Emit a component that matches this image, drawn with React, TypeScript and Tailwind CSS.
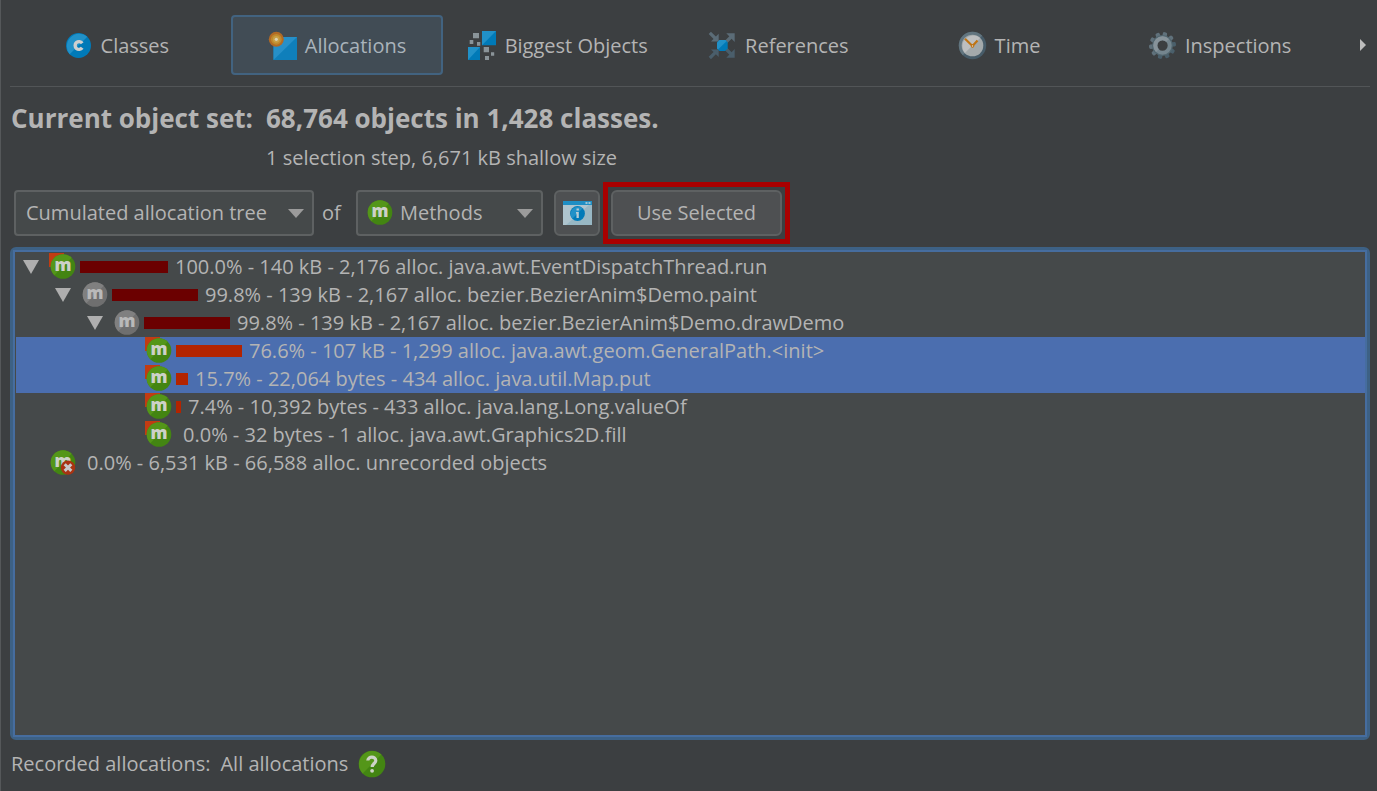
import { useState } from "react";
import type { ReactNode } from "react";

type Kind = "method" | "inner" | "unrecorded";

type Node = {
  depth: number;
  open?: boolean;
  kind: Kind;
  flag?: boolean;
  bar: number;
  dark?: boolean;
  selected?: boolean;
  text: string;
};

const nodes: Node[] = [
  { depth: 0, open: true, kind: "method", flag: true, bar: 88, dark: true, text: "100.0% - 140 kB - 2,176 alloc. java.awt.EventDispatchThread.run" },
  { depth: 1, open: true, kind: "inner", bar: 86, dark: true, text: "99.8% - 139 kB - 2,167 alloc. bezier.BezierAnim$Demo.paint" },
  { depth: 2, open: true, kind: "inner", bar: 86, dark: true, text: "99.8% - 139 kB - 2,167 alloc. bezier.BezierAnim$Demo.drawDemo" },
  { depth: 3, kind: "method", flag: true, bar: 66, selected: true, text: "76.6% - 107 kB - 1,299 alloc. java.awt.geom.GeneralPath.<init>" },
  { depth: 3, kind: "method", flag: true, bar: 12, selected: true, text: "15.7% - 22,064 bytes - 434 alloc. java.util.Map.put" },
  { depth: 3, kind: "method", flag: true, bar: 5, text: "7.4% - 10,392 bytes - 433 alloc. java.lang.Long.valueOf" },
  { depth: 3, kind: "method", flag: true, bar: 0, text: "0.0% - 32 bytes - 1 alloc. java.awt.Graphics2D.fill" },
  { depth: 0, kind: "unrecorded", bar: 0, text: "0.0% - 6,531 kB - 66,588 alloc. unrecorded objects" },
];

function MethodIcon({ kind = "method", flag = false }: { kind?: Kind; flag?: boolean }) {
  const grey = kind === "inner";
  return (
    <svg width="27" height="28" viewBox="0 0 27 28" className="shrink-0" aria-hidden="true">
      {flag && <path d="M0 0h15v4L4 14H0z" fill="#c23c12" />}
      <circle cx="14" cy="13.5" r="12.3" fill={grey ? "#6f6f6f" : "#438512"} />
      <path d="M5.3 22.2A12.3 12.3 0 0 1 22.7 4.8z" fill={grey ? "#808080" : "#549619"} />
      <text x="14" y="18" textAnchor="middle" fontSize="17" fontWeight="800" fill={grey ? "#b9b9b9" : "#cdd1c8"}>
        m
      </text>
      {kind === "unrecorded" && (
        <>
          <circle cx="19" cy="18.6" r="7.2" fill="#a93312" />
          <path d="M15.7 15.3l6.6 6.6M22.3 15.3l-6.6 6.6" stroke="#c8c8c8" strokeWidth="3" />
        </>
      )}
    </svg>
  );
}

function ClassesIcon() {
  return (
    <svg width="29" height="29" viewBox="0 0 29 29" aria-hidden="true">
      <circle cx="14.5" cy="14.5" r="12.5" fill="#007ab8" />
      <path d="M5.7 23.3A12.5 12.5 0 0 1 23.3 5.7z" fill="#2191c8" />
      <path d="M18.2 12.2A3.900 3.900 0 1 0 18.200 16.800" fill="none" stroke="#cfcfcf" strokeWidth="3.400" />
    </svg>
  );
}

function AllocationsIcon() {
  return (
    <svg width="29" height="29" viewBox="0 0 29 29" aria-hidden="true">
      <path d="M5.5 6H29v23H5.5z" fill="#0f7fbb" />
      <path d="M5.5 6H29L5.5 29z" fill="#2690c9" />
      <circle cx="8.3" cy="8.3" r="7.5" fill="#b26a24" />
      <circle cx="8.3" cy="8.3" r="5.4" fill="#c08a2c" />
      <circle cx="8.3" cy="8.3" r="3.4" fill="#c9a046" />
      <circle cx="8.3" cy="8.3" r="1.6" fill="#dcd3b4" />
    </svg>
  );
}

function BiggestIcon() {
  return (
    <svg width="29" height="29" viewBox="0 0 29 29" aria-hidden="true">
      <path d="M14 0h14v14.3H14zM0 16h12v13H0z" fill="#007ab8" />
      <path d="M14 0h14L14 14.3zM0 16h12L0 29z" fill="#2191c8" />
      <path
        d="M5 2h6v5.3H5zM1.7 9h3.6v4H1.7zM9 11h3.3v3.7H9zM15.7 16H21v5.3h-5.3zM23 21.3h3.2v3.5H23zM17 25h4v4h-4z"
        fill="#8a9499"
      />
    </svg>
  );
}

// left arrows point at the object, right arrows away from it
function ReferencesIcon() {
  return (
    <svg width="29" height="29" viewBox="0 0 29 29" aria-hidden="true">
      <g fill="#5b6c77" stroke="#5b6c77">
        <path d="M3 10.400h7.700V2.700z" stroke="none" />
        <path d="M1.800 1.800L8 8M16 13L24 5" fill="none" strokeWidth="3.200" />
        <path d="M18.300 2.300h8.400V11z" stroke="none" />
      </g>
      <g fill="#4a5e6b" stroke="#4a5e6b">
        <path d="M3 18.400h7.700V26z" stroke="none" />
        <path d="M1.800 27L8 20.800M16 16L24 24" fill="none" strokeWidth="3.200" />
        <path d="M18.300 26.700h8.400V18z" stroke="none" />
      </g>
      <path d="M11.500 9h6l2.200 2.500v6L17 20h-5.500L9 17.500v-6z" fill="#007ab8" />
      <path d="M11.500 9h6l1 1.200-8.500 8.300-1-1v-6z" fill="#2191c8" />
    </svg>
  );
}

function TimeIcon() {
  return (
    <svg width="29" height="29" viewBox="0 0 29 29" aria-hidden="true">
      <circle cx="14.5" cy="14.5" r="13.7" fill="#475c69" />
      <path d="M4.8 24.2A13.7 13.7 0 0 1 24.200 4.800z" fill="#62757f" />
      <circle cx="14.5" cy="14.5" r="10.8" fill="#a3a9ab" />
      <path d="M6.9 22.1A10.8 10.8 0 0 1 22.100 6.900z" fill="#bdbfc0" />
      <path d="M7 7.800l7.500 7.200 5-5.400" fill="none" stroke="#bf7414" strokeWidth="2.200" />
      <circle cx="14.5" cy="15" r="1.8" fill="#bf7414" />
      <circle cx="14.5" cy="15" r="0.7" fill="#ddd" />
    </svg>
  );
}

function InspectionsIcon() {
  const teeth = [12, 48, 84, 120, 156, 192, 228, 264, 300, 336];
  return (
    <svg width="29" height="29" viewBox="0 0 29 29" aria-hidden="true">
      {teeth.map((a) => (
        <rect
          key={a}
          x="12.300"
          y="1"
          width="4.400"
          height="7"
          rx="1.600"
          fill={a > 50 && a < 220 ? "#4a5f6b" : "#60717b"}
          transform={`rotate(${a} 14.5 14.5)`}
        />
      ))}
      <circle cx="14.5" cy="14.5" r="9.5" fill="none" stroke="#52666f" strokeWidth="2" />
      <circle cx="14.5" cy="14.5" r="7.2" fill="none" stroke="#74858e" strokeWidth="4" />
      <path d="M9.4 19.6A7.2 7.2 0 0 1 19.600 9.400" fill="none" stroke="#87939a" strokeWidth="4" />
    </svg>
  );
}

function WindowInfoIcon() {
  return (
    <svg width="29" height="24" viewBox="0 0 29 24" aria-hidden="true">
      <path d="M0 0h29v24H0z" fill="#98b7c4" />
      <path d="M0 4h26L3 24H0z" fill="#aec4ce" />
      <path d="M0 0h29v4H0z" fill="#1f8ec4" />
      <path d="M22.5 1h2v2h-2zM25.5 1h2v2h-2z" fill="#9cc4d6" />
      <circle cx="14.5" cy="12.5" r="7.4" fill="#007ab8" />
      <path d="M9.3 17.7A7.4 7.4 0 0 1 19.700 7.300z" fill="#2191c8" />
      <path d="M13.5 7.5h2.4v2h-2.4zM13 11h2.8v6h-2.3v-4.600H13z" fill="#b5cbd5" />
    </svg>
  );
}

const tabs: { name: string; icon: ReactNode }[] = [
  { name: "Classes", icon: <ClassesIcon /> },
  { name: "Allocations", icon: <AllocationsIcon /> },
  { name: "Biggest Objects", icon: <BiggestIcon /> },
  { name: "References", icon: <ReferencesIcon /> },
  { name: "Time", icon: <TimeIcon /> },
  { name: "Inspections", icon: <InspectionsIcon /> },
];

function Arrow() {
  return (
    <svg width="16" height="9" viewBox="0 0 16 9" className="pointer-events-none absolute right-[10px]" aria-hidden="true">
      <path d="M0 0h16L8 9z" fill="#9b9b9b" />
    </svg>
  );
}

function TreeRow({ node }: { node: Node }) {
  return (
    <li
      role="treeitem"
      aria-level={node.depth + 1}
      aria-selected={!!node.selected}
      aria-expanded={node.open}
      className={`flex h-7 items-center whitespace-nowrap pr-2 ${node.selected ? "bg-[#4b6eaf]" : ""}`}
      style={{ paddingLeft: 7 + node.depth * 32 }}
    >
      <span className="mr-[10px] flex w-4 shrink-0">
        {node.open && (
          <svg width="16" height="14" viewBox="0 0 16 14" aria-hidden="true">
            <path d="M0 0h16L8 14z" fill="#afafaf" />
          </svg>
        )}
      </span>
      <MethodIcon kind={node.kind} flag={node.flag} />
      <span
        className={`ml-1 mr-[7px] h-3 shrink-0 ${node.dark ? "bg-[#6b0000]" : "bg-[#b32400]"}`}
        style={{ width: node.bar }}
      />
      <span>{node.text}</span>
    </li>
  );
}

export default function App() {
  const [active, setActive] = useState("Allocations");

  return (
    <div className="flex min-h-screen flex-col border-l border-[#55585a] bg-[#3c3f41] pl-[9px] pr-[7px] font-['Open_Sans','Noto_Sans',sans-serif] text-[20px] leading-7 text-[#b4b4b4]">
      {/* Tabs */}
      <nav className="flex items-center gap-2 border-b border-[#525557] pb-[11px] pt-[15px]">
        {tabs.map((tab) => (
          <button
            key={tab.name}
            type="button"
            onClick={() => setActive(tab.name)}
            className={`flex h-15 min-w-0 flex-1 items-center justify-center gap-2 whitespace-nowrap rounded-sm border-2 pt-px ${
              active === tab.name ? "border-[#426380] bg-[#414c55] text-[#a9b3bb]" : "border-transparent"
            }`}
          >
            <span className="shrink-0">{tab.icon}</span>
            {tab.name}
          </button>
        ))}
        <button type="button" aria-label="More views" className="flex h-15 w-9 items-center justify-end pr-1">
          <svg width="7" height="12" viewBox="0 0 7 12" aria-hidden="true">
            <path d="M1 0l6 6-6 6z" fill="#bdbdbd" />
          </svg>
        </button>
      </nav>

      {/* Object set summary */}
      <section className="grid grid-cols-[255px_1fr] pb-3 pl-px pt-[11px]">
        <h1 className="text-[26px] font-bold leading-10">Current object set:</h1>
        <p className="text-[26px] font-bold leading-10">68,764 objects in 1,428 classes.</p>
        <p className="col-start-2 leading-10">1 selection step, 6,671 kB shallow size</p>
      </section>

      {/* Toolbar */}
      <div className="flex items-center pb-[11px] pl-1">
        <div className="relative flex items-center">
          <select
            aria-label="View mode"
            className="h-[46px] w-[300px] appearance-none rounded-sm border-2 border-[#5e6162] bg-[#45494a] pl-[10px] pr-8"
          >
            <option>Cumulated allocation tree</option>
          </select>
          <Arrow />
        </div>
        <label htmlFor="aggregation" className="w-[42px] pl-2">
          of
        </label>
        <div className="relative flex items-center">
          <span className="pointer-events-none absolute left-[10px]">
            <MethodIcon />
          </span>
          <select
            id="aggregation"
            className="h-[46px] w-[187px] appearance-none rounded-sm border-2 border-[#5e6162] bg-[#45494a] pl-[42px] pr-8"
          >
            <option>Methods</option>
          </select>
          <Arrow />
        </div>
        <button
          type="button"
          aria-label="Show allocation options"
          className="ml-[11px] flex h-[46px] w-[46px] items-center justify-center rounded-md border-2 border-[#5e6162] bg-[#4e5052]"
        >
          <WindowInfoIcon />
        </button>
        <div className="relative ml-[11px]">
          <button type="button" className="h-[46px] w-[171px] rounded-md border-2 border-[#5e6162] bg-[#4e5052]">
            Use Selected
          </button>
          <span className="pointer-events-none absolute -inset-2 border-5 border-[#a90000]" />
        </div>
      </div>

      {/* Allocation tree */}
      <div className="flex flex-1 flex-col rounded-md border-3 border-[#3d6185] bg-[#45494a]">
        <ul role="tree" aria-label="Allocation tree" className="flex-1 border-2 border-[#466d9f] pl-px pt-px">
          {nodes.map((node) => (
            <TreeRow key={node.text} node={node} />
          ))}
        </ul>
      </div>

      {/* Recording state */}
      <footer className="flex h-[51px] items-center gap-[10px] pb-1 pl-px">
        <span>Recorded allocations:</span>
        <span>All allocations</span>
        <button type="button" aria-label="Help">
          <svg width="28" height="28" viewBox="0 0 28 28" aria-hidden="true">
            <circle cx="14" cy="14" r="13.3" fill="#438512" />
            <path d="M4.6 23.4A13.3 13.3 0 0 1 23.400 4.600z" fill="#549619" />
            <path d="M9.8 10.5c.2-4.6 8-4.400 8 0 0 3-3.600 3-3.600 6.500" fill="none" stroke="#cdd3c6" strokeWidth="3.200" />
            <circle cx="14.1" cy="20.800" r="1.900" fill="#cdd3c6" />
          </svg>
        </button>
      </footer>
    </div>
  );
}
